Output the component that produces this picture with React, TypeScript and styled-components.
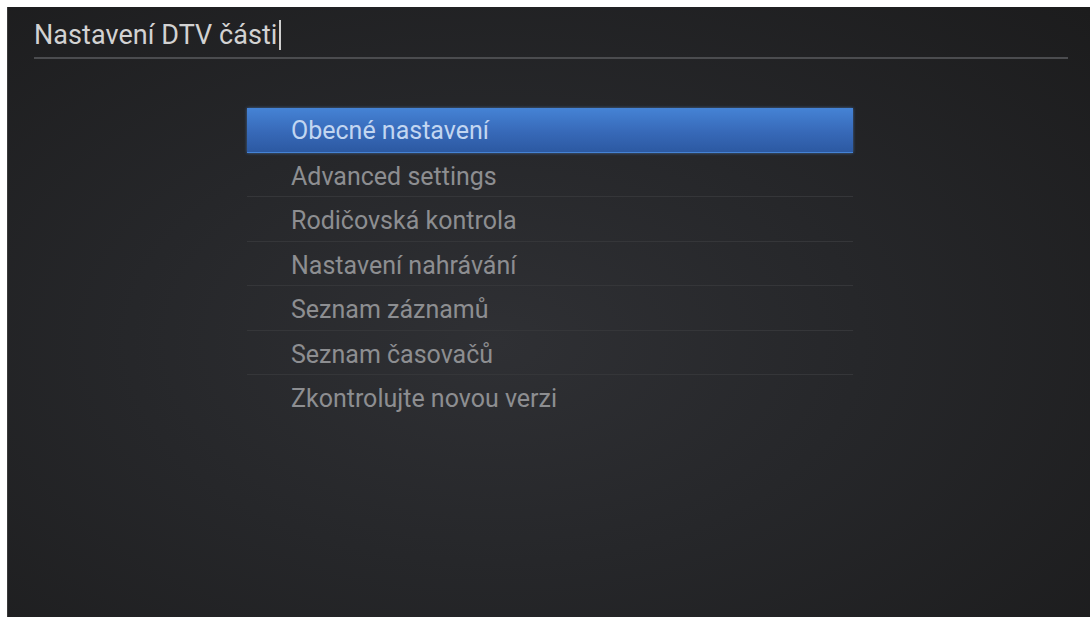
import styled, { createGlobalStyle } from "styled-components";

const GlobalStyle = createGlobalStyle`
  html, body {
    margin: 0;
    padding: 0;
    background: #ffffff;
  }
  body {
    font-family: Roboto, "Noto Sans", sans-serif;
    overflow: hidden;
  }
`;

const items = [
  "Obecné nastavení",
  "Advanced settings",
  "Rodičovská kontrola",
  "Nastavení nahrávání",
  "Seznam záznamů",
  "Seznam časovačů",
  "Zkontrolujte novou verzi",
];

export default function App() {
  return (
    <>
      <GlobalStyle />
      <Screen>
        <Header>
          <Title>Nastavení DTV části</Title>
          <Caret />
        </Header>
        <Divider />

        <Menu>
          {items.map((label, i) => (
            <MenuRow key={label} $active={i === 0} $last={i === items.length - 1}>
              {label}
            </MenuRow>
          ))}
        </Menu>
      </Screen>
    </>
  );
}

const Screen = styled.div`
  margin: 7px 0 0 7px;
  width: 1083px;
  height: 610px;
  display: flex;
  flex-direction: column;
  background: radial-gradient(
    ellipse 75% 80% at 45% 55%,
    #2f3034 0%,
    #26272a 45%,
    #1c1c1d 100%
  );
  border-left: 1px solid #3a3a3a;
`;

const Header = styled.div`
  display: flex;
  align-items: center;
  padding: 12px 0 0 26px;
  height: 32px;
`;

const Title = styled.span`
  font-size: 27px;
  line-height: 32px;
  color: #d2d2d2;
  letter-spacing: 0.05px;
`;

const Caret = styled.span`
  display: inline-block;
  width: 2px;
  height: 30px;
  margin-left: 2px;
  background: #cfcfcf;
`;

const Divider = styled.div`
  margin: 6px 0 0 26px;
  width: 1034px;
  height: 2px;
  background: #4b4c4f;
`;

const Menu = styled.div`
  display: flex;
  flex-direction: column;
  margin: 49px 0 0 239px;
  width: 606px;
`;

const MenuRow = styled.div<{ $active: boolean; $last: boolean }>`
  box-sizing: border-box;
  height: 44.5px;
  display: flex;
  align-items: center;
  padding: ${(p) => (p.$active ? "2px" : "4px")} 0 0 44px;
  font-size: 25px;
  color: ${(p) => (p.$active ? "#c2d6f1" : "#8d8e91")};
  background: ${(p) =>
    p.$active
      ? "linear-gradient(to bottom, #4583d5 0%, #3769b8 55%, #2c59a2 100%)"
      : "transparent"};
  box-shadow: ${(p) => (p.$active ? "0 0 3px rgba(90, 150, 230, 0.6)" : "none")};
  border-bottom: ${(p) =>
    p.$active || p.$last ? "1px solid transparent" : "1px solid #353639"};
`;
